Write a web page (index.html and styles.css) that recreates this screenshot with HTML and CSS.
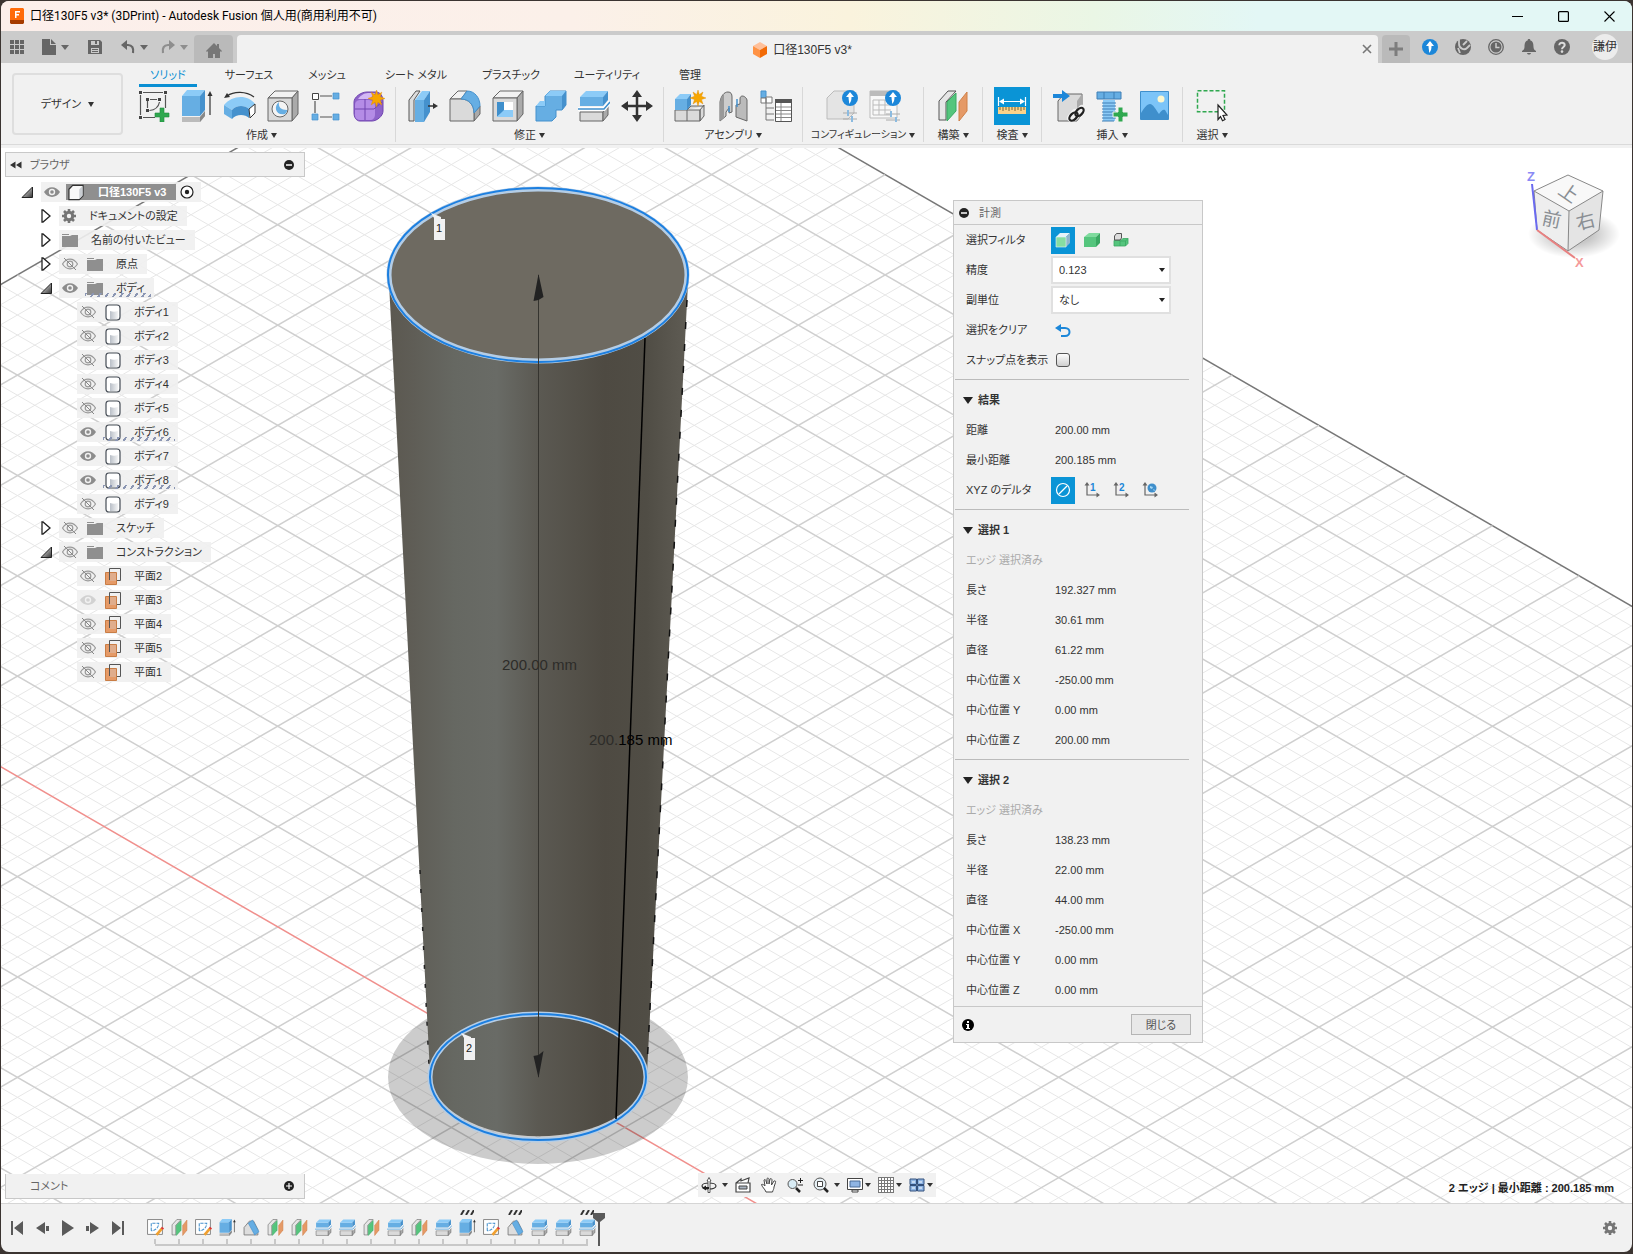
FILE: index.html
```html
<!doctype html>
<html lang="ja">
<head>
  <meta charset="utf-8">
  <meta name="viewport" content="width=device-width, initial-scale=1">
  <title>口径130F5 v3* (3DPrint) - Autodesk Fusion</title>
  <link rel="stylesheet" href="styles.css">
</head>
<body>

<!-- icon sprite -->
<svg class="sprite" aria-hidden="true">
	<defs>
		<linearGradient id="g-body" x1="0" x2="1" y1="0" y2="0">
			<stop offset="0" stop-color="#5b5850"/><stop offset=".08" stop-color="#5f5d56"/>
			<stop offset=".22" stop-color="#666862"/><stop offset=".36" stop-color="#696b66"/>
			<stop offset=".5" stop-color="#5b5952"/><stop offset=".72" stop-color="#4e4a42"/>
			<stop offset=".86" stop-color="#504d45"/><stop offset="1" stop-color="#5f5c54"/>
		</linearGradient>
		<linearGradient id="g-fade" x1="0" x2="1" y1="0" y2="1">
			<stop offset="0" stop-color="#fff"/><stop offset="1" stop-color="#333"/>
		</linearGradient>
		<linearGradient id="g-solid" x1="0" x2="1" y1="0" y2="0">
			<stop offset="0" stop-color="#b9bfc7"/><stop offset="1" stop-color="#f4f5f6"/>
		</linearGradient>
		<radialGradient id="g-cubeshadow"><stop offset=".4" stop-color="#000" stop-opacity=".22"/><stop offset="1" stop-color="#000" stop-opacity="0"/></radialGradient>
	</defs>

	<symbol id="i-apps" viewBox="0 0 14 14"><path fill="#666" d="M0 0h4v4H0zM5 0h4v4H5zM10 0h4v4h-4zM0 5h4v4H0zM5 5h4v4H5zM10 5h4v4h-4zM0 10h4v4H0zM5 10h4v4H5zM10 10h4v4h-4z"/></symbol>
	<symbol id="i-file" viewBox="0 0 14 16"><path fill="#666" d="M0 0h8v6h6v10H0zM9 0l5 5H9z"/></symbol>
	<symbol id="i-save" viewBox="0 0 14 14"><path fill="#666" fill-rule="evenodd" d="M0 0h12l2 2v12H0zM3 1v4h8V1H9v3H7V1zM3 8v5h8V8zM4 9h6v1H4zM4 11h6v1H4z"/></symbol>
	<symbol id="i-undo" viewBox="0 0 14 14"><path d="M3 5h4c4 0 6 3 5 8" fill="none" stroke="#666" stroke-width="2.200"/><path fill="#666" d="M0 5l6-5v10z"/></symbol>
	<symbol id="i-home" viewBox="0 0 16 15"><path fill="#777" d="M8 0l3 3V1h2v4l3 3-1 1-1-1v7H9v-4H7v4H2V8L1 9 0 8z"/></symbol>
	<symbol id="i-close" viewBox="0 0 10 10"><path d="M1 1l8 8M9 1l-8 8" stroke="#777" stroke-width="1.600"/></symbol>
	<symbol id="i-plus" viewBox="0 0 14 14"><path fill="#7d7d7d" d="M5.500 0h3v5.500H14v3H8.500V14h-3V8.500H0v-3h5.500z"/></symbol>
	<symbol id="i-doc" viewBox="0 0 14 16"><path fill="#ffc09a" d="M7 0l7 4-7 4-7-4z"/><path fill="#ff9345" d="M0 4l7 4v8l-7-4z"/><path fill="#f26a06" d="M14 4L7 8v8l7-4z"/></symbol>
	<symbol id="i-up" viewBox="0 0 16 16"><circle cx="8" cy="8" r="8" fill="#1c87d9"/><path fill="#fff" d="M8 2l4 5H9.500c0 3-.5 5-2.500 7 .5-2-.5-4-.5-7H4z"/></symbol>
	<symbol id="i-ext" viewBox="0 0 16 16"><circle cx="8" cy="8" r="8" fill="#666"/><path d="M4 0v5c0 4 5 7 8 4M12 9l3-3M8 6l4-4M3 9l2 5" fill="none" stroke="#cbcbcb" stroke-width="1.800"/></symbol>
	<symbol id="i-clock" viewBox="0 0 16 16"><circle cx="8" cy="8" r="7.300" fill="none" stroke="#666" stroke-width="1.300"/><circle cx="8" cy="8" r="5.500" fill="#666"/><path d="M8 4v4.500h3.500" fill="none" stroke="#cbcbcb" stroke-width="1.500"/></symbol>
	<symbol id="i-bell" viewBox="0 0 16 16"><path fill="#666" d="M8 0c1 0 1.500.8 1.300 1.500C12 2 12.500 5 12.500 8c0 2 1 3 2.500 4v1H1v-1c1.500-1 2.500-2 2.500-4 0-3 .5-6 3.200-6.500C6.500.8 7 0 8 0zM6 14h4c-.5 2-3.500 2-4 0z"/></symbol>
	<symbol id="i-help" viewBox="0 0 16 16"><circle cx="8" cy="8" r="8" fill="#666"/><path d="M5.300 6.200C5.300 2.800 11 3 10.700 6.200 10.500 8 8 8 8 10.200" fill="none" stroke="#dcdcdc" stroke-width="2"/><circle cx="8" cy="12.600" r="1.300" fill="#dcdcdc"/></symbol>

	<!-- toolbar -->
	<symbol id="i-sketch" viewBox="0 0 32 32"><path d="M5 2.500h20M27.500 5v13M2.500 5v20M5 27.500h12" fill="none" stroke="#555" stroke-width="1.200"/><path d="M9.500 18v-7M12 9.500h7M21.500 12c-1 5-4 8-10 8.500" fill="none" stroke="#555" stroke-width="1.200"/><path fill="#444" d="M1 1h3v3H1zM26 1h3v3h-3zM1 26h3v3H1zM8 8h3v3H8zM20 8h3v3h-3zM8 19h3v3H8z"/><path fill="#2fa84f" stroke="#1f8a3e" stroke-width=".6" d="M22 18h4v5h5v4h-5v5h-4v-5h-5v-4h5z"/></symbol>
	<symbol id="i-extrude" viewBox="0 0 32 32"><path fill="#bbb" d="M1 27h18l5-6v5l-5 6H1z"/><path fill="#888" d="M19 27l5-6v5l-5 6z"/><path fill="#66aee3" d="M1 6h18v20H1z"/><path fill="#8ccbf7" d="M1 6l5-6h18l-5 6z"/><path fill="#4591cd" d="M19 6l5-6v20l-5 6z"/><path d="M29 25V4" stroke="#333" stroke-width="1.200"/><path fill="#333" d="M29 1l2.500 5h-5z"/></symbol>
	<symbol id="i-revolve" viewBox="0 0 32 32"><path fill="#8ccbf7" d="M0 15C8 5 24 4 31 14l-6 5c-4-4-13-4-17 1z"/><path fill="#66aee3" d="M0 15l8 5v9L0 24z"/><path fill="#4591cd" d="M8 20c4-5 13-5 17-1v9c-4-4-13-4-17 1z"/><path fill="#fff" stroke="#333" d="M25 19l6-5v9l-5 5z"/><path d="M3 6c7-5 19-5 27 1" fill="none" stroke="#333" stroke-width="1.300"/><path fill="#333" d="M0 8l3-5 3 4z"/></symbol>
	<symbol id="i-hole" viewBox="0 0 32 32"><path fill="#f2f2f2" stroke="#666" d="M1 8l7-7h23l-6 7z"/><path fill="#aaa" stroke="#666" d="M25 8l6-7v23l-6 7z"/><path fill="#dadada" stroke="#666" d="M1 8h24v23H1z"/><circle cx="13" cy="19" r="8" fill="#f4f4f4" stroke="#666"/><path fill="#66aee3" d="M12 12c-6 5-3 14 6 12 2-2 2-3 2-4-6 0-9-3-8-8z"/></symbol>
	<symbol id="i-pattern" viewBox="0 0 32 32"><path d="M10 6h12M5 11v12M10 27h12" stroke="#555" stroke-width="1.200"/><path fill="#fff" stroke="#444" d="M2.500 3.500h6v6h-6z"/><path fill="#66aee3" stroke="#4591cd" stroke-width=".7" d="M23 3h6v6h-6zM2 24h6v6H2zM23 24h6v6h-6z"/></symbol>
	<symbol id="i-star" viewBox="0 0 16 16"><path fill="#f7a600" stroke="#e08c00" stroke-width=".4" d="M8 0l1.300 4.500L13 2l-1.500 4.300L16 8l-4.500 1.500L13 14l-3.700-2.500L8 16l-1.300-4.500L3 14l1.500-4.500L0 8l4.500-1.700L3 2l3.700 2.500z"/></symbol>
	<symbol id="i-form" viewBox="0 0 32 32"><path fill="#8e63c9" stroke="#7045b0" d="M1 12c0-5 7-10 13-10h9c4 0 7 4 7 9v10c0 5-6 10-11 10H7c-4 0-6-4-6-8z"/><path fill="#b48ce6" d="M2 15c0-4 3-5 6-5h6c6 0 8 2 8 6v8c0 4-2 6-5 6H8c-4 0-6-2-6-5z"/><path fill="#d3b8f5" d="M5 9c2-3 6-6 10-6h7l-5 6H9z"/><path d="M12 9v21M2 19h19l8-7" fill="none" stroke="#7045b0"/><use href="#i-star" x="15" y="0" width="17" height="17"/></symbol>
	<symbol id="i-presspull" viewBox="0 0 32 32"><path fill="#ddd" stroke="#555" d="M3 10l7-9h4l-6 9v21H3z"/><path fill="#66aee3" d="M9 10h9v22H9z"/><path fill="#8ccbf7" d="M9 10l7-9h8l-6 9z"/><path fill="#4591cd" d="M18 10l6-9v21l-6 10z"/><path d="M22 16h7" stroke="#333" stroke-width="1.500"/><path fill="#333" d="M27 13l5 3-5 3z"/></symbol>
	<symbol id="i-fillet" viewBox="0 0 32 32"><path fill="#f2f2f2" stroke="#666" d="M1 9l8-8h9l-6 8z"/><path fill="#aaa" stroke="#666" d="M25 23l6-7v8l-6 7z"/><path fill="#dadada" stroke="#666" d="M1 9h11c8 0 13 6 13 14v8H1z"/><path fill="#66aee3" stroke="#4591cd" d="M12 9l6-8c8 0 13 7 13 15l-6 7c0-8-5-14-13-14z"/></symbol>
	<symbol id="i-shell" viewBox="0 0 32 32"><path fill="#f2f2f2" stroke="#666" d="M1 8l7-7h23l-6 7z"/><path fill="#aaa" stroke="#666" d="M25 8l6-7v23l-6 7z"/><path fill="#dadada" stroke="#666" d="M1 8h24v23H1z"/><path fill="#fff" d="M5 12h16v15H5z"/><path fill="#3f8fcc" d="M5 12h7v9l-7 6z"/><path fill="#8ccbf7" d="M5 27l7-7h9v7z"/></symbol>
	<symbol id="i-combine" viewBox="0 0 32 32"><path fill="#66aee3" stroke="#4591cd" d="M1 16h9V6l5-5h16v14l-4 5h-6v7l-4 4H1z"/><path fill="#8ccbf7" d="M10 6l5-5h16l-4 5zM1 16l4-5h5v5z"/><path fill="#4591cd" d="M27 6l4-5v14l-4 5z"/></symbol>
	<symbol id="i-split" viewBox="0 0 32 32"><path fill="#66aee3" d="M2 7h23v9H2z"/><path fill="#8ccbf7" d="M2 7l6-6h22l-5 6z"/><path fill="#4591cd" d="M25 7l5-6v9l-5 6z"/><path fill="#dadada" stroke="#666" d="M2 22h23v9H2z"/><path fill="#aaa" stroke="#666" d="M25 22l5-6v9l-5 6z"/><path d="M0 19h26l6-7" fill="none" stroke="#fff" stroke-width="4"/><path d="M0 19h26l6-7" fill="none" stroke="#3f8fcc" stroke-width="1.500"/></symbol>
	<symbol id="i-move" viewBox="0 0 32 32"><path d="M16 5v22M5 16h22" stroke="#333" stroke-width="2.500"/><path fill="#333" d="M16 0l5 7H11zM16 32l-5-7h10zM0 16l7-5v10zM32 16l-7 5V11z"/></symbol>
	<symbol id="i-newcomp" viewBox="0 0 32 32"><path fill="#dadada" stroke="#666" d="M1 20h25v11H1zM26 20l4-5v11l-4 5zM13 20v11M13 20l4-4h13"/><path fill="#66aee3" d="M1 9h12v11H1z"/><path fill="#8ccbf7" d="M1 9l5-5h11l-4 5z"/><path fill="#4591cd" d="M13 9l4-5v11l-4 5z"/><use href="#i-star" x="16" y="0" width="16" height="16"/></symbol>
	<symbol id="i-joint" viewBox="0 0 32 32"><path fill="#ccc" stroke="#666" d="M3 31V12C4 6 7 2 11 2c3 0 4 2 4 5v15l-3 1v-5l-3 4v4z"/><path fill="#bbb" stroke="#666" d="M30 31l-11-4V15l4-1V9c0-5 6-3 7 1z"/><path fill="#999" d="M3 31V12c1-4 2-6 4-8v23z"/><path d="M12 16v6M20 9v8" stroke="#4591cd" stroke-width="1.500"/></symbol>
	<symbol id="i-bom" viewBox="0 0 32 32"><path fill="#66aee3" stroke="#4591cd" d="M1 1h5v7H1z"/><path fill="#fff" stroke="#777" d="M1 8h5v5H1zM6 7h6v6H6z"/><path d="M6 13v17M6 18h8M6 24h8M6 30h8" fill="none" stroke="#777"/><path fill="#fff" stroke="#555" d="M15.500 9.500h16v22h-16z"/><path fill="#555" d="M15 9h17v4H15z"/><path d="M16 17h15M16 20.500h15M16 24h15M16 27.500h15M21 13v18" stroke="#888"/></symbol>
	<symbol id="i-config" viewBox="0 0 32 32"><path fill="#e4e4e4" stroke="#bbb" d="M1 8l7-7h20v22l-6 6H1z"/><path d="M17 23h14M17 29h14" stroke="#aaa"/><path d="M22 20v6M26 26v6" stroke="#8cbbe0" stroke-width="2"/><use href="#i-up" x="16" y="0" width="16" height="16"/></symbol>
	<symbol id="i-conftable" viewBox="0 0 32 32"><path fill="#f8f8f8" stroke="#bbb" d="M1 1h27v27H1z"/><path fill="#bbb" d="M1 1h27v5H1z"/><path d="M4 10h18M4 15h18M4 20h18M4 25h18M4 10v15M10 10v15M16 10v15" stroke="#bbb"/><path d="M17 24h14M17 30h14" stroke="#aaa"/><path d="M22 21v6M27 27v5" stroke="#8cbbe0" stroke-width="2"/><use href="#i-up" x="16" y="0" width="16" height="16"/></symbol>
	<symbol id="i-plane" viewBox="0 0 32 32"><path fill="#e6e6e6" stroke="#555" d="M2 11L11 1h8L9 12v18H2z"/><path fill="#55c57d" stroke="#3aa862" d="M10 12l9-9v18l-9 10z"/><path fill="#e59a67" stroke="#cf8049" d="M22 12l8-10v19l-8 10z"/></symbol>
	<symbol id="i-measure" viewBox="0 0 32 32"><path d="M2.500 7v9M29.500 7v9M4 11.500h24" stroke="#fff" stroke-width="1.200"/><path fill="#fff" d="M3 11.500l5-3v6zM29 11.500l-5-3v6z"/><path fill="#fbd38a" d="M2 17h28v7H2z"/><path d="M4 17v3M7 17v4M10 17v3M13 17v4M16 17v3M19 17v4M22 17v3M25 17v4M28 17v3" stroke="#7a6236"/></symbol>
	<symbol id="i-insert" viewBox="0 0 32 32"><path fill="#dadada" stroke="#666" d="M5 11l6-7h18v20l-5 7H5z"/><path fill="#aaa" d="M24 11l5-7v20l-5 7z"/><path fill="#1c87d9" d="M0 4h9V0l8 6-8 6V8H0z"/><path d="M18 28l4-5M24 24l5-5M21 27l5-5" stroke="#f1f1f1" stroke-width="8" stroke-linecap="round"/><g fill="none" stroke="#222" stroke-width="2.200"><ellipse cx="20.500" cy="26.500" rx="5" ry="3" transform="rotate(-45 20.500 26.500)"/><ellipse cx="26.500" cy="22" rx="5" ry="3" transform="rotate(-45 26.500 22)"/></g></symbol>
	<symbol id="i-bolt" viewBox="0 0 32 32"><path fill="#66aee3" stroke="#3f7fb5" d="M1 2h24v7H1zM8 2v7M18 2v7"/><path fill="#8ccbf7" d="M7 10h12v21H7z"/><path d="M6 13h14M6 16h14M6 19h14M6 22h14M6 25h14M6 28h14M6 31h12" stroke="#3f7fb5" stroke-width="1.200"/><path fill="#2fa84f" stroke="#f1f1f1" d="M22 17h5v5h5v5h-5v5h-5v-5h-5v-5h5z"/></symbol>
	<symbol id="i-image" viewBox="0 0 32 32"><path fill="#7cc4f8" stroke="#3f8fcc" d="M1.500 1.500h28v28h-28z"/><circle cx="22" cy="9" r="3.500" fill="#fdf7cf"/><path fill="#3f8fcc" d="M2 23c3-5 6-9 9-9s6 6 9 10c2-3 4-5 6-4l3 5v4H2z"/></symbol>
	<symbol id="i-select" viewBox="0 0 32 32"><path d="M1.500.800h27v21h-27z" fill="none" stroke="#2fa84f" stroke-width="1.500" stroke-dasharray="4 2"/><path fill="#fff" stroke="#222" stroke-width="1.200" d="M22 15l9 10-4 .500 2 4-2.500 1.300-2-4.300-2.500 3z"/></symbol>

	<!-- browser tree -->
	<symbol id="i-eye" viewBox="0 0 16 10"><path fill="#8c8c8c" d="M0 5c4-6.500 12-6.500 16 0-4 6.500-12 6.500-16 0z"/><circle cx="8" cy="5" r="3.200" fill="#f1f1f1"/><circle cx="8" cy="5" r="1.800" fill="#8c8c8c"/></symbol>
	<symbol id="i-eyeoff" viewBox="0 0 16 12"><path d="M.500 6c4-6.500 11-6.500 15 0-4 6.500-11 6.500-15 0z" fill="none" stroke="#999" stroke-width="1.200"/><circle cx="8" cy="6" r="2.800" fill="none" stroke="#999" stroke-width="1.200"/><path d="M2 0l12 12" stroke="#888"/></symbol>
	<symbol id="i-folder" viewBox="0 0 16 13"><path fill="#8f8f8f" d="M0 0h7v1H0zM0 2h8l2-1h6v12H0z"/></symbol>
	<symbol id="i-gear" viewBox="0 0 14 14"><circle cx="7" cy="7" r="3.700" fill="none" stroke="#757575" stroke-width="3"/><path d="M7 0v3M7 11v3M0 7h3M11 7h3M2 2l2 2M10 10l2 2M12 2l-2 2M2 12l2-2" stroke="#757575" stroke-width="2.600"/></symbol>
	<symbol id="i-cube" viewBox="0 0 17 17"><path fill="#f8f8f8" stroke="#333" stroke-width="1.300" d="M1 5l4-4h11v11l-4 4H1z"/><path fill="#c9cdd2" d="M12 5l3.500-3.500V12L12 15.500z"/></symbol>
	<symbol id="i-solid" viewBox="0 0 16 17"><path fill="#fff" stroke="#454c55" stroke-width="1.200" d="M1 4c0-2 1-3 3-3h8c2 0 3 1 3 3v9c0 2-1 3-3 3H4c-2 0-3-1-3-3z"/><path fill="url(#g-solid)" d="M5 7c3 1 5 1 8 0v8H5z"/></symbol>
	<symbol id="i-cplane" viewBox="0 0 16 17"><path fill="#e59a67" stroke="#c97d45" d="M.500 4.500h11v12H.500z"/><path fill="#e0ad8c" d="M5 5h6v8H5z"/><path d="M4.500 12V.500h11v12H12" fill="none" stroke="#555"/></symbol>
	<symbol id="i-open" viewBox="0 0 12 12"><path fill="url(#g-fade)" stroke="#222" d="M11.500 1v10.500H1z"/></symbol>
	<symbol id="i-closed" viewBox="0 0 10 14"><path fill="#fff" stroke="#222" stroke-width="1.300" d="M1 1h1l7 6-7 6H1z"/></symbol>
	<symbol id="i-target" viewBox="0 0 14 14"><circle cx="7" cy="7" r="6" fill="#fff" stroke="#222" stroke-width="1.200"/><circle cx="7" cy="7" r="2.200" fill="#222"/></symbol>
	<symbol id="i-minus" viewBox="0 0 10 10"><circle cx="5" cy="5" r="5" fill="#222"/><path d="M2 5h6" stroke="#fff" stroke-width="1.500"/></symbol>
	<symbol id="i-add" viewBox="0 0 10 10"><circle cx="5" cy="5" r="5" fill="#222"/><path d="M2 5h6M5 2v6" stroke="#fff" stroke-width="1.200"/></symbol>
	<symbol id="i-rew" viewBox="0 0 12 8"><path fill="#333" d="M0 4l5.500-3.500v7zM6 4l5.500-3.500v7z"/></symbol>

	<!-- measure panel -->
	<symbol id="i-face" viewBox="0 0 16 16"><path fill="#e6f3fa" d="M1 5l4-4h10l-4 4z"/><path fill="#8fb5cc" d="M11 5l4-4v10l-4 4z"/><path fill="#86dda2" stroke="#e6f3fa" stroke-width=".6" d="M1 5h10v10H1z"/></symbol>
	<symbol id="i-bodyf" viewBox="0 0 16 16"><path fill="#7fdb9e" d="M0 5l5-4h11l-4 4z"/><path fill="#3aa862" d="M12 5l4-4v10l-4 4z"/><path fill="#55c57d" d="M0 5h12v10H0z"/></symbol>
	<symbol id="i-compf" viewBox="0 0 16 16"><path fill="#55c57d" stroke="#3aa862" stroke-width=".8" d="M1 8.500h6V9l3-2.500h5v5L12.500 14H1zM7 9v5M7 9h5.500v5M12.500 9L15 6.500"/><path fill="#ddd" stroke="#555" d="M1.500 4l2-2.500h5V6L7 8H1.500z"/></symbol>
	<symbol id="i-clear" viewBox="0 0 16 13"><path d="M4 4h6c6 0 6 8 0 8H6" fill="none" stroke="#1c87d9" stroke-width="2"/><path fill="#1c87d9" d="M0 4l6-4v8z"/></symbol>
	<symbol id="i-none" viewBox="0 0 16 16"><circle cx="8" cy="8" r="6.500" fill="none" stroke="#fff" stroke-width="1.200"/><path d="M4 12l8-8" stroke="#fff" stroke-width="1.200"/></symbol>
	<symbol id="i-axes" viewBox="0 0 16 16"><path d="M3 2v11h11" fill="none" stroke="#666" stroke-width="1.200"/><path fill="#666" d="M3 0l2.500 3.500h-5zM16 13l-3.500 2.500v-5z"/></symbol>
	<symbol id="i-info" viewBox="0 0 12 12"><circle cx="6" cy="6" r="6" fill="#000"/><path fill="#fff" d="M5 2h2v2H5zM4 5h3v4h1v1H4V9h1V6H4z"/></symbol>

	<!-- navigation bar -->
	<symbol id="i-orbit" viewBox="0 0 16 16"><ellipse cx="8" cy="9" rx="7" ry="3" fill="none" stroke="#333" stroke-width="1.200"/><path fill="#fff" stroke="#333" stroke-width=".8" d="M8 .500L10 4H9v11.500H7V4H6z"/><path fill="#222" d="M1 11l4-2.500V10h3v2H5v1.500z"/></symbol>
	<symbol id="i-look" viewBox="0 0 16 16"><path fill="#fff" stroke="#444" stroke-width="1.200" d="M1 6h14v9H1zM1 6l5-4v2l8-3-1 5"/><path fill="#aab4c0" stroke="#444" d="M4 9h8v3H4z"/></symbol>
	<symbol id="i-pan" viewBox="0 0 16 16"><path fill="#fff" stroke="#444" d="M5 15C4 12 1 10 .500 7.500 2 7 3 8 4 9L3 3c1-1 2 0 2 1l1 3V1.500c1-1 2 0 2 1V7l1-5c1-1 2 0 2 1l-.5 5L13 4c1-.5 2 0 1.500 1.500L13 10c0 2-1 3-1.500 5z"/></symbol>
	<symbol id="i-zoom" viewBox="0 0 16 16"><circle cx="5.500" cy="7" r="4.500" fill="#d9ecf5" stroke="#555"/><path d="M9 11l4 4" stroke="#222" stroke-width="2.500"/><path d="M11 3.500h5M13.500 1v5M11 8h5" stroke="#222"/></symbol>
	<symbol id="i-fit" viewBox="0 0 16 16"><circle cx="7" cy="7" r="6" fill="#e6f0f5" stroke="#555"/><path fill="#fff" stroke="#444" d="M4.500 4.500h5v5h-5z"/><path d="M11 11l4 4" stroke="#222" stroke-width="2.500"/></symbol>
	<symbol id="i-display" viewBox="0 0 16 16"><path fill="#fff" stroke="#444" d="M.500 1.500h15v11H.500zM5 13h6v2H5z"/><path fill="#8fb4e3" stroke="#4a6a95" d="M3 4h10v6H3z"/></symbol>
	<symbol id="i-grid" viewBox="0 0 16 16"><path fill="#fff" d="M0 0h16v16H0z"/><path d="M.500 0v16M3.500 0v16M6.500 0v16M9.500 0v16M12.500 0v16M15.500 0v16M0 .500h16M0 3.500h16M0 6.500h16M0 9.500h16M0 12.500h16M0 15.500h16" stroke="#777"/></symbol>
	<symbol id="i-views" viewBox="0 0 16 14"><path fill="#8fb4e3" stroke="#33507c" d="M1 1h6.500v5.500H1zM8.500 1H15v5.500H8.500zM1 7.500h6.500V13H1zM8.500 7.500H15V13H8.500z"/><path d="M3 3h3v2H3zM10 3h3v2h-3zM3 9h3v2H3zM10 9h3v2h-3z" fill="#c5d9f1"/></symbol>

	<!-- timeline -->
	<symbol id="i-first" viewBox="0 0 12 14"><path fill="#5a5a5a" d="M0 0h2v14H0zM12 0v14L3 7z"/></symbol>
	<symbol id="i-prev" viewBox="0 0 13 12"><path fill="#5a5a5a" d="M9 0v12L0 6zM10 4h3v5h-3z"/></symbol>
	<symbol id="i-play" viewBox="0 0 12 16"><path fill="#5a5a5a" d="M0 0l12 8-12 8z"/></symbol>
	<symbol id="i-tsketch" viewBox="0 0 16 16"><path fill="#fff" stroke="#777" stroke-width=".8" d="M.500.500h14v14H.500z"/><path d="M4 11V4h7c0 4-3 7-7 7" fill="none" stroke="#4591cd" stroke-dasharray="3 1"/><path d="M14 9l-5 6" stroke="#f0a030" stroke-width="2.500"/><path d="M15 8l-1 1.500" stroke="#d33" stroke-width="2.500"/></symbol>
	<symbol id="i-tdraft" viewBox="0 0 16 16"><path fill="#ddd" stroke="#777" stroke-width=".8" d="M1 15V8l5-6h4l4 8v5z"/><path fill="#66aee3" stroke="#4591cd" stroke-width=".6" d="M5 4l4-3 6 11-4 3z"/></symbol>
	<symbol id="i-flag" viewBox="0 0 14 5"><path d="M1 5l3-5M6 5l3-5M11 5l3-5" stroke="#333" stroke-width="2"/></symbol>
</svg>

<div class="window">
	<header class="titlebar">
		<svg class="app-icon" viewBox="0 0 14 16"><path fill="#ff6b0a" d="M1 0h12l1 1v11H0V1z"/><path fill="#a63c00" d="M0 12h14v3l-1 1H1l-1-1z"/><path fill="#fff" d="M5 3h5v1.500H6.500V6H9v1.500H6.500V10H5z"/></svg>
		<h1>口径130F5 v3* (3DPrint) - Autodesk Fusion 個人用(商用利用不可)</h1>
		<div class="win-buttons">
			<button aria-label="最小化"><svg viewBox="0 0 11 11"><path d="M0 5.500h11" stroke="#000"/></svg></button>
			<button aria-label="最大化"><svg viewBox="0 0 11 11"><rect x=".6" y=".6" width="9.800" height="9.800" rx="1" fill="none" stroke="#000" stroke-width="1.200"/></svg></button>
			<button aria-label="閉じる"><svg viewBox="0 0 11 11"><path d="M.500.500l10 10M10.500.500l-10 10" stroke="#000" stroke-width="1.100"/></svg></button>
		</div>
	</header>

	<div class="tabbar">
		<div class="quick">
			<button class="q-apps" aria-label="データ パネル"><svg width="14" height="14"><use href="#i-apps"/></svg></button>
			<button class="q-file caret" aria-label="ファイル"><svg width="14" height="16"><use href="#i-file"/></svg></button>
			<button class="q-save" aria-label="保存"><svg width="14" height="14"><use href="#i-save"/></svg></button>
			<button class="q-undo caret" aria-label="元に戻す"><svg width="14" height="14"><use href="#i-undo"/></svg></button>
			<button class="q-redo caret" aria-label="やり直し"><svg width="14" height="14"><use href="#i-undo"/></svg></button>
		</div>
		<button class="home-tab" aria-label="ホーム"><svg width="16" height="15"><use href="#i-home"/></svg></button>
		<div class="doc-tab">
			<svg width="14" height="16"><use href="#i-doc"/></svg>
			<span>口径130F5 v3*</span>
			<button aria-label="タブを閉じる"><svg width="10" height="10"><use href="#i-close"/></svg></button>
		</div>
		<button class="new-tab" aria-label="新しいタブ"><svg width="14" height="14"><use href="#i-plus"/></svg></button>
		<div class="status-icons">
			<button aria-label="更新"><svg><use href="#i-up"/></svg></button>
			<button aria-label="拡張機能"><svg><use href="#i-ext"/></svg></button>
			<button aria-label="ジョブ"><svg><use href="#i-clock"/></svg></button>
			<button aria-label="通知"><svg><use href="#i-bell"/></svg></button>
			<button aria-label="ヘルプ"><svg><use href="#i-help"/></svg></button>
			<button class="avatar">謙伊</button>
		</div>
	</div>

	<div class="toolbar">
		<button class="workspace caret">デザイン</button>
		<div class="ribbon">
			<nav class="ribbon-tabs">
				<a href="#" class="active">ソリッド</a>
				<a href="#">サーフェス</a>
				<a href="#">メッシュ</a>
				<a href="#">シート メタル</a>
				<a href="#">プラスチック</a>
				<a href="#">ユーティリティ</a>
				<a href="#">管理</a>
			</nav>
			<div class="groups">
				<div class="group">
					<div class="tools">
						<button aria-label="スケッチを作成"><svg><use href="#i-sketch"/></svg></button>
						<button aria-label="押し出し"><svg><use href="#i-extrude"/></svg></button>
						<button aria-label="回転"><svg><use href="#i-revolve"/></svg></button>
						<button aria-label="穴"><svg><use href="#i-hole"/></svg></button>
						<button aria-label="パターン"><svg><use href="#i-pattern"/></svg></button>
						<button aria-label="フォームを作成"><svg><use href="#i-form"/></svg></button>
					</div>
					<button class="group-name caret">作成</button>
				</div>
				<div class="group">
					<div class="tools">
						<button aria-label="プレス/プル"><svg><use href="#i-presspull"/></svg></button>
						<button aria-label="フィレット"><svg><use href="#i-fillet"/></svg></button>
						<button aria-label="シェル"><svg><use href="#i-shell"/></svg></button>
						<button aria-label="結合"><svg><use href="#i-combine"/></svg></button>
						<button aria-label="ボディを分割"><svg><use href="#i-split"/></svg></button>
						<button aria-label="移動"><svg><use href="#i-move"/></svg></button>
					</div>
					<button class="group-name caret">修正</button>
				</div>
				<div class="group">
					<div class="tools">
						<button aria-label="新規コンポーネント"><svg><use href="#i-newcomp"/></svg></button>
						<button aria-label="ジョイント"><svg><use href="#i-joint"/></svg></button>
						<button aria-label="部品表"><svg><use href="#i-bom"/></svg></button>
					</div>
					<button class="group-name caret">アセンブリ</button>
				</div>
				<div class="group config">
					<div class="tools">
						<button aria-label="設定"><svg><use href="#i-config"/></svg></button>
						<button aria-label="テーブル"><svg><use href="#i-conftable"/></svg></button>
					</div>
					<button class="group-name caret">コンフィギュレーション</button>
				</div>
				<div class="group single">
					<div class="tools"><button aria-label="オフセット平面"><svg><use href="#i-plane"/></svg></button></div>
					<button class="group-name caret">構築</button>
				</div>
				<div class="group single">
					<div class="tools"><button class="on" aria-label="計測"><svg><use href="#i-measure"/></svg></button></div>
					<button class="group-name caret">検査</button>
				</div>
				<div class="group wide">
					<div class="tools">
						<button aria-label="挿入"><svg><use href="#i-insert"/></svg></button>
						<button aria-label="ファスナー"><svg><use href="#i-bolt"/></svg></button>
						<button aria-label="キャンバス"><svg><use href="#i-image"/></svg></button>
					</div>
					<button class="group-name caret">挿入</button>
				</div>
				<div class="group single">
					<div class="tools"><button aria-label="選択"><svg><use href="#i-select"/></svg></button></div>
					<button class="group-name caret">選択</button>
				</div>
			</div>
		</div>
	</div>

	<main class="viewport">
		<svg class="scene" aria-hidden="true">
			<g transform="translate(-1 -148)">
				<g id="grid"></g>
				<ellipse cx="538" cy="1077" rx="150" ry="87" fill="#000" fill-opacity=".2"/>
				<path fill="url(#g-body)" d="M389 283l41 790a108 63 0 0 0 217 0l41-790z"/>
				<path d="M687 300L647 1066" stroke="#111" stroke-width="1.500" stroke-dasharray="7 15"/>
				<path d="M420 870L429 1066" stroke="#222" stroke-width="1.500" stroke-dasharray="4 15"/>
				<ellipse cx="538" cy="275" rx="149" ry="86" fill="#6e6a61"/>
				<ellipse class="edge-halo" cx="538" cy="275" rx="149" ry="86"/>
				<ellipse class="edge" cx="538" cy="275" rx="150" ry="87"/>
				<ellipse class="edge-halo" cx="538" cy="1077" rx="108" ry="63"/>
				<ellipse class="edge" cx="538" cy="1077" rx="108" ry="63"/>
				<path d="M645 338L616 1119" stroke="#000" stroke-width="1.500"/>
				<path d="M538.500 275v802" stroke="#35342f"/>
				<path fill="#222" d="M538.500 274l5 23-5 3-5 1zM538.500 1078l5-27-5 4-5 1z"/>
				<text class="dim" x="502" y="670">200.00 mm</text>
				<text class="dim" x="589" y="745">200.<tspan class="front">185 mm</tspan></text>
				<path fill="#f1f1f1" d="M431 213l10 4v2h4v21h-11v-22zM461 1033l10 4v1h4v22h-11v-22z"/>
				<text class="pick" x="436" y="232">1</text>
				<text class="pick" x="466" y="1052">2</text>
			</g>
		</svg>

		<section class="browser">
			<header class="bar">
				<svg width="12" height="8"><use href="#i-rew"/></svg>
				<h2>ブラウザ</h2>
				<button aria-label="最小化"><svg width="10" height="10"><use href="#i-minus"/></svg></button>
			</header>
			<ul class="tree">
				<li class="l0"><svg class="tw"><use href="#i-open"/></svg><div class="node"><svg class="eye"><use href="#i-eye"/></svg><span class="root"><svg><use href="#i-cube"/></svg>口径130F5 v3</span><svg class="target"><use href="#i-target"/></svg></div></li>
				<li class="l1"><svg class="tw"><use href="#i-closed"/></svg><div class="node"><svg class="gear"><use href="#i-gear"/></svg><span>ドキュメントの設定</span></div></li>
				<li class="l1"><svg class="tw"><use href="#i-closed"/></svg><div class="node"><svg><use href="#i-folder"/></svg><span>名前の付いたビュー</span></div></li>
				<li class="l1"><svg class="tw"><use href="#i-closed"/></svg><div class="node"><svg class="eye"><use href="#i-eyeoff"/></svg><svg><use href="#i-folder"/></svg><span>原点</span></div></li>
				<li class="l1 used"><svg class="tw"><use href="#i-open"/></svg><div class="node"><svg class="eye"><use href="#i-eye"/></svg><svg><use href="#i-folder"/></svg><span>ボディ</span></div></li>
				<li class="l2"><div class="node"><svg class="eye"><use href="#i-eyeoff"/></svg><svg><use href="#i-solid"/></svg><span>ボディ1</span></div></li>
				<li class="l2"><div class="node"><svg class="eye"><use href="#i-eyeoff"/></svg><svg><use href="#i-solid"/></svg><span>ボディ2</span></div></li>
				<li class="l2"><div class="node"><svg class="eye"><use href="#i-eyeoff"/></svg><svg><use href="#i-solid"/></svg><span>ボディ3</span></div></li>
				<li class="l2"><div class="node"><svg class="eye"><use href="#i-eyeoff"/></svg><svg><use href="#i-solid"/></svg><span>ボディ4</span></div></li>
				<li class="l2"><div class="node"><svg class="eye"><use href="#i-eyeoff"/></svg><svg><use href="#i-solid"/></svg><span>ボディ5</span></div></li>
				<li class="l2 used"><div class="node"><svg class="eye"><use href="#i-eye"/></svg><svg><use href="#i-solid"/></svg><span>ボディ6</span></div></li>
				<li class="l2"><div class="node"><svg class="eye"><use href="#i-eye"/></svg><svg><use href="#i-solid"/></svg><span>ボディ7</span></div></li>
				<li class="l2 used"><div class="node"><svg class="eye"><use href="#i-eye"/></svg><svg><use href="#i-solid"/></svg><span>ボディ8</span></div></li>
				<li class="l2"><div class="node"><svg class="eye"><use href="#i-eyeoff"/></svg><svg><use href="#i-solid"/></svg><span>ボディ9</span></div></li>
				<li class="l1"><svg class="tw"><use href="#i-closed"/></svg><div class="node"><svg class="eye"><use href="#i-eyeoff"/></svg><svg><use href="#i-folder"/></svg><span>スケッチ</span></div></li>
				<li class="l1"><svg class="tw"><use href="#i-open"/></svg><div class="node"><svg class="eye"><use href="#i-eyeoff"/></svg><svg><use href="#i-folder"/></svg><span>コンストラクション</span></div></li>
				<li class="l2"><div class="node"><svg class="eye"><use href="#i-eyeoff"/></svg><svg><use href="#i-cplane"/></svg><span>平面2</span></div></li>
				<li class="l2"><div class="node"><svg class="eye dim-eye"><use href="#i-eye"/></svg><svg><use href="#i-cplane"/></svg><span>平面3</span></div></li>
				<li class="l2"><div class="node"><svg class="eye"><use href="#i-eyeoff"/></svg><svg><use href="#i-cplane"/></svg><span>平面4</span></div></li>
				<li class="l2"><div class="node"><svg class="eye"><use href="#i-eyeoff"/></svg><svg><use href="#i-cplane"/></svg><span>平面5</span></div></li>
				<li class="l2"><div class="node"><svg class="eye"><use href="#i-eyeoff"/></svg><svg><use href="#i-cplane"/></svg><span>平面1</span></div></li>
			</ul>
		</section>

		<svg class="viewcube" viewBox="0 0 110 110" role="img" aria-label="ビューキューブ">
			<ellipse cx="54" cy="74" rx="46" ry="24" fill="url(#g-cubeshadow)"/>
			<path fill="#f8f8f8" d="M48 15l35 16-34 20-35-20z"/>
			<path fill="#eee" d="M14 31l35 20-1 40-31-21z"/>
			<path fill="#e4e4e4" d="M83 31L49 51l-1 40 31-21z"/>
			<path d="M48 15l35 16-4 39-31 21-31-21-3-39zM14 31l35 20 34-20M49 51l-1 40" fill="none" stroke="#888"/>
			<path d="M12 24l5 46" stroke="#6a6af0" stroke-width="2"/>
			<path d="M17 70l38 28" stroke="#e88080" stroke-width="2"/>
			<text x="7" y="21" class="axis z">Z</text>
			<text x="55" y="107" class="axis x">X</text>
			<text class="face" transform="translate(37 33) rotate(35)">上</text>
			<text class="face" transform="translate(21 64) rotate(12)">前</text>
			<text class="face" transform="translate(58 70) rotate(-14)">右</text>
		</svg>

		<form class="measure">
			<header><svg width="10" height="10"><use href="#i-minus"/></svg><h2>計測</h2></header>
			<section class="options">
				<div class="row"><span>選択フィルタ</span>
					<div class="choices">
						<button type="button" class="on" aria-label="面/エッジ/頂点"><svg><use href="#i-face"/></svg></button>
						<button type="button" aria-label="ボディ"><svg><use href="#i-bodyf"/></svg></button>
						<button type="button" aria-label="コンポーネント"><svg><use href="#i-compf"/></svg></button>
					</div>
				</div>
				<div class="row"><label for="precision">精度</label><div class="select"><select id="precision"><option>0.123</option></select></div></div>
				<div class="row"><label for="unit">副単位</label><div class="select"><select id="unit"><option>なし</option></select></div></div>
				<div class="row"><span>選択をクリア</span><button type="button" class="clear" aria-label="選択をクリア"><svg width="16" height="13"><use href="#i-clear"/></svg></button></div>
				<div class="row"><label for="snap">スナップ点を表示</label><input type="checkbox" id="snap"></div>
			</section>
			<section>
				<h3>結果</h3>
				<div class="row"><span>距離</span><output>200.00 mm</output></div>
				<div class="row"><span>最小距離</span><output>200.185 mm</output></div>
				<div class="row"><span>XYZ のデルタ</span>
					<div class="choices">
						<button type="button" class="on" aria-label="なし"><svg><use href="#i-none"/></svg></button>
						<button type="button" aria-label="選択 1"><svg><use href="#i-axes"/><text x="6" y="9">1</text></svg></button>
						<button type="button" aria-label="選択 2"><svg><use href="#i-axes"/><text x="6" y="9">2</text></svg></button>
						<button type="button" aria-label="ワールド"><svg><use href="#i-axes"/><circle cx="10" cy="6" r="4.500" fill="#3f8fcc"/><path d="M8 4l3 1-1 2-2-1zM11 7l2 1-1 1z" fill="#a5d8f5"/></svg></button>
					</div>
				</div>
			</section>
			<section>
				<h3>選択 1</h3>
				<p class="row note">エッジ 選択済み</p>
				<div class="row"><span>長さ</span><output>192.327 mm</output></div>
				<div class="row"><span>半径</span><output>30.61 mm</output></div>
				<div class="row"><span>直径</span><output>61.22 mm</output></div>
				<div class="row"><span>中心位置 X</span><output>-250.00 mm</output></div>
				<div class="row"><span>中心位置 Y</span><output>0.00 mm</output></div>
				<div class="row"><span>中心位置 Z</span><output>200.00 mm</output></div>
			</section>
			<section>
				<h3>選択 2</h3>
				<p class="row note">エッジ 選択済み</p>
				<div class="row"><span>長さ</span><output>138.23 mm</output></div>
				<div class="row"><span>半径</span><output>22.00 mm</output></div>
				<div class="row"><span>直径</span><output>44.00 mm</output></div>
				<div class="row"><span>中心位置 X</span><output>-250.00 mm</output></div>
				<div class="row"><span>中心位置 Y</span><output>0.00 mm</output></div>
				<div class="row"><span>中心位置 Z</span><output>0.00 mm</output></div>
			</section>
			<footer><svg width="12" height="12"><use href="#i-info"/></svg><button type="button">閉じる</button></footer>
		</form>

		<div class="comments bar">
			<h2>コメント</h2>
			<button aria-label="展開"><svg width="10" height="10"><use href="#i-add"/></svg></button>
		</div>

		<div class="navbar">
			<button class="caret" aria-label="オービット"><svg><use href="#i-orbit"/></svg></button>
			<button aria-label="ビュー正面"><svg><use href="#i-look"/></svg></button>
			<button aria-label="画面移動"><svg><use href="#i-pan"/></svg></button>
			<button aria-label="ズーム"><svg><use href="#i-zoom"/></svg></button>
			<button class="caret" aria-label="フィット"><svg><use href="#i-fit"/></svg></button>
			<button class="caret tight" aria-label="表示設定"><svg><use href="#i-display"/></svg></button>
			<button class="caret tight" aria-label="グリッド"><svg><use href="#i-grid"/></svg></button>
			<button class="caret tight" aria-label="ビューポート"><svg><use href="#i-views"/></svg></button>
		</div>

		<p class="readout">2 エッジ | 最小距離 : 200.185 mm</p>
	</main>

	<footer class="timeline">
		<div class="playback">
			<button aria-label="先頭へ"><svg width="12" height="14"><use href="#i-first"/></svg></button>
			<button aria-label="前へ"><svg width="13" height="12"><use href="#i-prev"/></svg></button>
			<button aria-label="再生"><svg width="12" height="16"><use href="#i-play"/></svg></button>
			<button class="flip" aria-label="次へ"><svg width="13" height="12"><use href="#i-prev"/></svg></button>
			<button class="flip" aria-label="末尾へ"><svg width="12" height="14"><use href="#i-first"/></svg></button>
		</div>
		<div class="history" id="history"></div>
		<svg class="marker" width="12" height="33" viewBox="0 0 12 33"><path fill="#5a5a5a" d="M0 0h12v5L7 9v24H5V9L0 5z"/></svg>
		<button class="settings" aria-label="設定"><svg width="14" height="14"><use href="#i-gear"/></svg></button>
	</footer>
</div>

<script src="script.js"></script>
</body>
</html>
```
FILE: styles.css
```css
html,body{
	margin:0; padding:0;
	height:100%;
}
*{ box-sizing:border-box; }
body{
	background:#3b3431;
	padding:1px 1px 2px;
	font-family:"Liberation Sans","Noto Sans CJK JP",sans-serif;
	font-feature-settings:"palt";
	font-size:11px;
	line-height:16px;
	color:#333;
	overflow:hidden;
}
button{
	font:inherit; color:inherit;
	font-feature-settings:inherit;
	background:none; border:0; padding:0; margin:0;
	display:flex; align-items:center; justify-content:center;
	cursor:pointer;
}
h1,h2,h3,p,ul{ margin:0; padding:0; font-size:inherit; font-weight:normal; }
ul{ list-style:none; }
svg{ display:block; flex:none; }
.sprite{ position:absolute; width:0; height:0; }
.caret:after{
	content:'';
	border:3px solid transparent;
	border-top:5px solid #333;
	border-bottom:0;
	margin-left:3px;
}

.window{
	height:100%;
	display:flex; flex-direction:column;
	background:#f1f1f1;
	border-radius:8px;
	overflow:hidden;
}

/* title bar */
.titlebar{
	height:30px; flex:none;
	display:flex; align-items:center;
	padding-left:9px;
	background:linear-gradient(90deg,#fcefeb 0%,#fbf0e9 35%,#faf3dd 52%,#eaf6e5 67%,#e3f7f5 77%,#e3f7f5 100%);
	color:#000;
}
.app-icon{ width:14px; height:16px; }
.titlebar h1{ flex:1; margin-left:6px; font-size:12px; font-family:Roboto,"Noto Sans CJK JP",sans-serif; }
.win-buttons{ display:flex; }
.win-buttons button{ width:46px; height:30px; }
.win-buttons svg{ width:11px; height:11px; }

/* document tabs */
.tabbar{
	height:32px; flex:none;
	display:flex; align-items:flex-end;
	background:#cbcbcb;
}
.quick{ display:flex; align-items:center; height:32px; width:193px; padding-left:9px; }
.quick .caret:after{ border-width:5px 4px 0; border-top-color:#666; margin-left:5px; }
.q-file{ margin-left:18px; }
.q-save{ margin-left:19px; }
.q-undo{ margin-left:19px; }
.q-redo{ margin-left:13px; opacity:.6; }
.q-redo svg{ transform:scaleX(-1); }
.home-tab{ width:39px; height:28px; background:#bababa; border-radius:4px 4px 0 0; padding-top:2px; }
.doc-tab{
	flex:1; height:28px; margin:0 4px;
	display:flex; align-items:center; justify-content:center;
	background:#f1f1f1; border-radius:4px 4px 0 0;
	padding:2px 10px 0 0;
	position:relative;
	font-size:12px;
}
.doc-tab span{ margin-left:6px; }
.doc-tab button{ position:absolute; right:6px; top:9px; }
.new-tab{ width:28px; height:28px; background:#bababa; border-radius:4px 4px 0 0; }
.status-icons{ display:flex; align-items:center; height:32px; padding:0 14px 0 11px; }
.status-icons button{ width:17px; height:32px; margin-right:16px; }
.status-icons svg{ width:16px; height:16px; }
.status-icons .avatar{ width:26px; height:26px; margin:0 0 0 6px; background:#ececec; border-radius:50%; font-size:12px; white-space:nowrap; }

/* ribbon */
.toolbar{
	height:85px; flex:none;
	display:flex;
	padding-left:11px;
	position:relative;
	border-bottom:3px solid #f1f1f1;
	box-shadow:inset 0 -1px #dadada;
}
.workspace{
	width:111px; height:62px; margin-top:10px;
	border:2px solid #dedede; border-radius:4px;
}
.workspace.caret:after{ margin-left:7px; }
.ribbon{ margin-left:5px; }
.ribbon-tabs{
	display:grid;
	grid-template-columns:80px 82px 74px 104px 86px 106px 60px;
	height:24px;
}
.ribbon-tabs a{
	color:#333; text-decoration:none; text-align:center;
	line-height:24px; position:relative;
}
.ribbon-tabs .active{ color:#0a8fd3; }
.ribbon-tabs .active:after{
	content:'';
	position:absolute; left:11px; right:11px; bottom:0;
	height:3px; background:#0a8fd3;
}
.groups{ display:flex; }
.group{
	padding:0 8px;
	border-right:1px solid #d8d8d8;
	height:55px;
}
.group:last-child{ border:0; }
.group.config{ padding:0 7px; width:121px; }
.group.config .group-name{ font-size:10px; }
.group.single{ padding:0 11px; }
.group.wide{ padding:0 9px; }
.tools{ display:flex; justify-content:center; gap:7px; }
.tools button{ width:36px; height:38px; }
.tools svg{ width:32px; height:32px; }
.tools .on{ background:#0a94d6; }
.group-name{ width:100%; height:20px; white-space:nowrap; }

/* 3D view */
.viewport{
	flex:1; min-height:0;
	position:relative;
	background:#fff;
	overflow:hidden;
}
.scene{ position:absolute; left:0; top:0; width:100%; height:100%; }
.minor{ stroke:#e7e7e7; }
.major{ stroke:#cfcfcf; stroke-width:1.5; }
.bound{ stroke:#777; stroke-width:1.5; }
.axis-x{ stroke:#f08f8c; stroke-width:1.5; }
.edge{ fill:none; stroke:#1c7fe0; stroke-width:2; }
.edge-halo{ fill:none; stroke:#b4cde6; stroke-width:5; }
.dim{ font-size:15px; fill:#2d2c29; }
.dim .front{ fill:#000; }
.pick{ font-size:11px; fill:#222; }

.bar{
	display:flex; align-items:center;
	width:300px; height:25px;
	background:#f1f1f1; border:1px solid #c8c8c8;
	color:#666;
}
.bar button{ margin-left:auto; margin-right:10px; }
.browser{ position:absolute; left:4px; top:4px; }
.browser .bar{ padding-left:4px; }
.bar h2{ margin-left:8px; }
.tree{ padding-top:5px; }
.tree li{ display:flex; align-items:center; height:20px; margin-bottom:4px; }
.tw{ width:12px; height:14px; margin-right:7px; }
.l0{ padding-left:16px; }
.l0 .tw{ margin-right:8px; }
.l1{ padding-left:35px; }
.l2{ padding-left:72px; }
.node{
	display:flex; align-items:center;
	height:20px; padding:0 9px 0 3px;
	background:rgba(240,240,240,.9);
	white-space:nowrap;
	position:relative;
}
.l0 .node{ padding-right:7px; }
.node svg{ width:16px; height:17px; }
.node .eye{ width:16px; height:12px; margin-right:9px; }
.node .gear{ width:14px; height:14px; }
.l0 .eye{ margin-right:6px; }
.node span{ margin-left:13px; }
.node .root{
	display:flex; align-items:center; gap:14px;
	height:16px; width:110px; margin:0 4px 0 0; padding-left:2px;
	background:#8f8f8f; color:#fff; font-weight:bold;
}
.node .target{ width:14px; height:14px; }
.node .dim-eye{ opacity:.3; }
/* hatch under items that feed the current selection */
.used .node:after{
	content:'';
	position:absolute; left:26px; right:3px; bottom:1px;
	height:4px;
	background:repeating-linear-gradient(125deg,#8b96b3 0 2px,transparent 2px 6px);
}

.viewcube{ position:absolute; right:2px; top:12px; width:110px; height:110px; }
.viewcube .face{ font-size:19px; fill:#8a8f94; }
.axis{ font-size:13px; font-weight:bold; }
.axis.z{ fill:#8a8af5; }
.axis.x{ fill:#f59a9a; }

/* measure dialog */
.measure{
	position:absolute; right:429px; top:52px;
	width:250px;
	background:#f1f1f1; border:1px solid #c8c8c8;
}
.measure header{
	display:flex; align-items:center; gap:10px;
	height:24px; padding-left:5px;
	border-bottom:1px solid #c8c8c8;
	color:#666;
}
.measure section{ padding:5px 0; }
.measure section:not(:last-of-type){ background:linear-gradient(#bbb,#bbb) 1px 100%/234px 1px no-repeat; }
.measure .options{ padding-top:0; }
.measure section:last-of-type{ padding-bottom:1px; }
.row,.measure h3{ display:flex; align-items:center; height:30px; padding-left:12px; }
.row > :first-child{ width:85px; white-space:nowrap; }
.row output{ margin-left:4px; }
.note{ color:#aaa; }
.measure h3{ font-weight:bold; padding-left:9px; }
.measure h3:before{
	content:'';
	border:5px solid transparent;
	border-top:7px solid #222; border-bottom:0;
	margin-right:5px;
}
.choices{ display:flex; gap:5px; }
.choices button{ width:24px; height:27px; }
.choices svg{ width:16px; height:16px; overflow:visible; }
.choices text{ font-size:10px; font-weight:bold; fill:#1c87d9; }
.choices .on{ background:#0a94d6; }
.select{ width:120px; position:relative; }
.select select{
	display:block; width:120px; height:28px;
	appearance:none;
	background:#fff; border:2px solid #e0e0e0;
	padding:0 6px;
	font:inherit; color:#333;
}
.select:after{
	content:'';
	position:absolute; right:6px; top:12px;
	border:3px solid transparent;
	border-top:4px solid #222; border-bottom:0;
}
.clear{ margin-left:4px; }
.row input{
	appearance:none;
	width:14px; height:14px; margin:0 0 0 5px;
	border:1px solid #555; border-radius:3px;
	background:linear-gradient(#fdfdfd,#cfcfcf);
}
.measure footer{
	display:flex; align-items:center; justify-content:space-between;
	height:36px; padding:0 11px 0 8px;
	border-top:1px solid #c8c8c8;
}
.measure footer button{ width:60px; height:21px; background:#e8e8e8; border:1px solid #b5b5b5; color:#555; }

.comments{ position:absolute; left:4px; bottom:4px; border-top:0; }
.comments h2{ margin-left:24px; }
.navbar{
	position:absolute; left:50%; bottom:6px;
	transform:translateX(-50%);
	display:flex; align-items:center; gap:10px;
	width:238px; height:24px; padding-left:3px;
	background:#f1f1f1;
}
.navbar svg{ width:16px; height:16px; }
.navbar .caret{ margin-right:-3px; }
.navbar .caret:after{ border-width:4px 3px 0; margin-left:5px; }
.navbar .tight:after{ margin-left:2px; }
.readout{ position:absolute; right:18px; bottom:7px; font-weight:bold; color:#222; }

/* timeline */
.timeline{
	height:49px; flex:none;
	display:flex; align-items:flex-start;
	border-top:1px solid #d5d5d5;
}
.playback{ display:flex; justify-content:space-between; align-items:center; width:123px; height:48px; padding-left:10px; }
.flip svg{ transform:scaleX(-1); }
.history{ display:flex; margin-left:19px; padding-top:15px; }
.feature{
	width:24px; height:27px;
	align-items:flex-start; justify-content:center;
	position:relative;
	border-bottom:2px solid #c8c8c8;
}
.feature:first-child{ border-image:linear-gradient(90deg,transparent 50%,#c8c8c8 50%) 2; }
.feature:last-child{ border-image:linear-gradient(90deg,#c8c8c8 54%,transparent 54%) 2; }
.feature svg{ width:17px; height:17px; }
.feature:after{
	content:'';
	position:absolute; left:11px; bottom:0;
	width:2px; height:5px; background:#c8c8c8;
}
.feature .flag{ position:absolute; left:5px; top:-9px; width:14px; height:5px; }
.marker{ margin:9px 0 0 -6px; }
.settings{ margin:17px 15px 0 auto; }
```
FILE: script.js
```js
// ground plane: 10mm lines with a heavier one every 50mm
(function(){
	var NS = 'http://www.w3.org/2000/svg',
		grid = document.getElementById('grid'),
		slope = 0.578,
		step = 20.06,
		cTop = -337,	// right-hand border
		cLeft = 285;	// left-hand border

	function line(x1,y1,x2,y2,cls){
		var l = document.createElementNS(NS,'line');
		l.setAttribute('x1',x1);
		l.setAttribute('y1',y1);
		l.setAttribute('x2',x2);
		l.setAttribute('y2',y2);
		l.setAttribute('class',cls);
		return l;
	}

	function draw(major){
		var i, c, x, cls;
		for(i = 0; i < 150; i++){
			if((i % 5 === 0) !== major) continue;
			cls = i === 0 ? 'bound' : (major ? 'major' : 'minor');
			c = cTop + i * step;
			x = (cLeft - c) / (2 * slope);
			grid.appendChild(line(x, slope*x + c, 4000, slope*4000 + c, i === 55 ? 'axis-x' : cls));
			c = cLeft + i * step;
			x = (c - cTop) / (2 * slope);
			grid.appendChild(line(x, c - slope*x, -100, c + slope*100, cls));
		}
	}
	draw(false);
	draw(true);
})();

// timeline features
(function(){
	var list = ['tsketch','plane','tsketch','extrude','tdraft','plane','plane','split','split','plane',
			'split','plane','split','extrude','tsketch','tdraft','split','split','split'],
		flagged = [13,15,18],
		html = '';
	list.forEach(function(name,i){
		html += '<button class="feature" aria-label="' + (i+1) + '">' +
			'<svg><use href="#i-' + name + '"/></svg>' +
			(flagged.indexOf(i) > -1 ? '<svg class="flag"><use href="#i-flag"/></svg>' : '') +
			'</button>';
	});
	document.getElementById('history').innerHTML = html;
})();
```
